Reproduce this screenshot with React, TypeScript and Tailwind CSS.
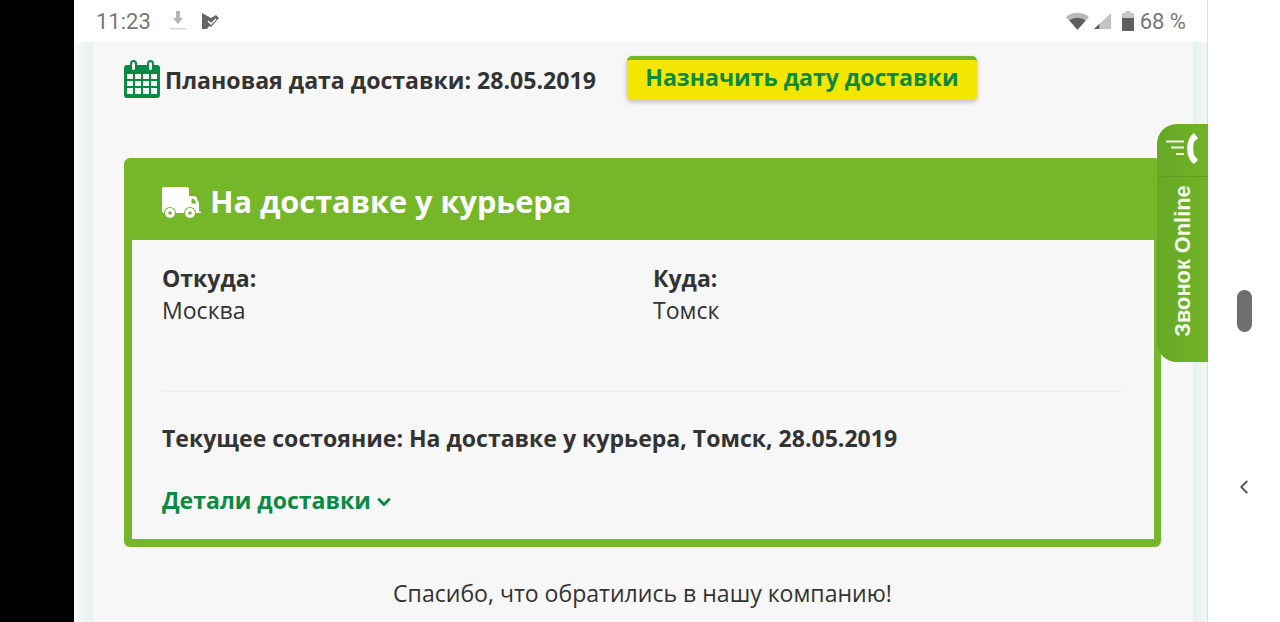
import React from 'react';
import { ChevronDown, ChevronLeft } from 'lucide-react';

const CalendarIcon = () => (
  <svg width="36" height="38" viewBox="0 0 36 38" className="shrink-0">
    <rect x="0" y="5" width="36" height="33" rx="3" fill="#0a8a43" />
    <rect x="6" y="0" width="7" height="11" rx="3.5" fill="#0a8a43" />
    <rect x="23" y="0" width="7" height="11" rx="3.5" fill="#0a8a43" />
    <rect x="8" y="2" width="3" height="8" rx="1.5" fill="#f6f6f6" />
    <rect x="25" y="2" width="3" height="8" rx="1.5" fill="#f6f6f6" />
    <path
      d="M3 14h6v5H3zM11 14h6v5h-6zM19 14h6v5h-6zM27 14h6v5h-6zM3 21h6v5H3zM11 21h6v5h-6zM19 21h6v5h-6zM27 21h6v5h-6zM3 28h6v6H3zM11 28h6v6h-6zM19 28h6v6h-6zM27 28h6v6h-6z"
      fill="#f6f6f6"
    />
  </svg>
);

const TruckIcon = () => (
  <svg width="39" height="32" viewBox="0 0 39 32" className="shrink-0 mt-[7px]">
    <path d="M2 0h23a2 2 0 0 1 2 2v7h5c1 0 2 .5 2.500 1.500L37 16v8l2 1v1H2a2 2 0 0 1-2-2V2a2 2 0 0 1 2-2z" fill="#fff" />
    <path d="M29.500 12H32l2.500 4.500h-5z" fill="#76b72a" />
    <circle cx="8" cy="26" r="6" fill="#76b72a" />
    <circle cx="28" cy="26" r="6" fill="#76b72a" />
    <circle cx="8" cy="26" r="5" fill="#fff" />
    <circle cx="8" cy="26" r="1.800" fill="#76b72a" />
    <circle cx="28" cy="26" r="5" fill="#fff" />
    <circle cx="28" cy="26" r="1.800" fill="#76b72a" />
  </svg>
);

const StatusIcons = () => (
  <div className="flex items-center">
    <svg width="23" height="18" viewBox="0 0 24 18">
      <path d="M0 5C6-1 18-1 24 5l-12 13z" fill="#b9b9b9" />
      <path d="M3.500 8.500C8 4.500 16 4.500 20.500 8.500L12 18z" fill="#5f5f5f" />
    </svg>
    <svg width="18" height="18" viewBox="0 0 20 18" className="ml-[5px]">
      <path d="M19 0v18H0z" fill="#c4c4c4" />
      <path d="M6 12v6H0z" fill="#5f5f5f" />
    </svg>
    <svg width="12" height="20" viewBox="0 0 12 20" className="ml-[10px]">
      <path d="M3.500 0h5v2H11a1 1 0 0 1 1 1v16a1 1 0 0 1-1 1H1a1 1 0 0 1-1-1V3a1 1 0 0 1 1-1h2.500z" fill="#c4c4c4" />
      <path d="M0 7h12v12a1 1 0 0 1-1 1H1a1 1 0 0 1-1-1z" fill="#5f5f5f" />
    </svg>
  </div>
);

const StatusBar = () => (
  <div className="h-[42px] flex items-center justify-between pl-[22px] pr-[21px] bg-white font-['Roboto',sans-serif] text-[#777] text-[22px]">
    <div className="flex items-center">
      <span>11:23</span>
      <svg width="18" height="20" viewBox="0 0 18 20" className="ml-[18px]">
        <path d="M7 0h4v7h3l-5 6-5-6h3z" fill="#b5b5b5" />
        <rect x="1" y="17" width="16" height="1.500" fill="#d5d5d5" />
      </svg>
      <svg width="17" height="16" viewBox="0 0 17 16" className="ml-[15px]">
        <path d="M0 0l9 5 5-3 3 3-8 9-2-1-2 3H0z" fill="#666" />
        <path d="M6 8l3 3 5-5" stroke="#fff" strokeWidth="1.500" fill="none" />
      </svg>
    </div>
    <div className="flex items-center">
      <StatusIcons />
      <span className="ml-[6px]">68 %</span>
    </div>
  </div>
);

const CallWidget = () => (
  <div className="absolute right-0 top-[124px] w-[51px] h-[238px] rounded-l-[20px] bg-gradient-to-r from-[#66a824] to-[#70b428] flex flex-col items-center">
    <div className="h-[53px] w-full flex items-center justify-center border-b border-[#5f9e20]">
      <svg width="34" height="34" viewBox="0 0 34 34">
        <path d="M0 8.500h18M5 14.500h13M10 21h8" stroke="#f0f5e8" strokeWidth="2" />
        <path d="M28 0l4 5-4 4c-1 4-1 9 0 13l4 5-4 4c-9-6-9-25 0-31z" fill="#fff" />
      </svg>
    </div>
    <div className="flex-1 w-full flex justify-center pt-[71px]">
      <span className="-rotate-90 h-[26px] leading-[26px] whitespace-nowrap font-['Liberation_Sans',sans-serif] font-bold text-[21.8px] text-[#f4f9ec]">
        Звонок Online
      </span>
    </div>
  </div>
);

const DeliveryCard = () => (
  <div className="mt-[58px] w-[1037px] rounded-[6px] bg-[#76b72a] overflow-hidden">
    <div className="h-[82px] flex items-center pl-[38px] gap-[9px] text-white font-bold text-[30.7px]">
      <TruckIcon />
      <span className="mt-[5px]">На доставке у курьера</span>
    </div>
    <div className="ml-[8px] mr-[7px] mb-[8px] h-[299px] bg-[#f7f7f7] pl-[30px] pr-[30px] text-[#333] text-[23.06px]">
      <div className="flex pt-[22px] h-[152px] border-b border-[#efefef] leading-[32px]">
        <div className="w-[491px]">
          <div className="font-bold">Откуда:</div>
          <div>Москва</div>
        </div>
        <div>
          <div className="font-bold">Куда:</div>
          <div>Томск</div>
        </div>
      </div>
      <div className="mt-[30px] font-bold leading-[32px]">
        Текущее состояние: На доставке у курьера, Томск, 28.05.2019
      </div>
      <div className="mt-[30px] flex items-center font-bold text-[#0a8a43] leading-[32px]">
        Детали доставки
        <ChevronDown size={20} strokeWidth={3.5} className="ml-[3px] mt-[4px]" />
      </div>
    </div>
  </div>
);

export default function App() {
  return (
    <div className="relative w-[1280px] h-[622px] flex overflow-hidden font-['Open_Sans',sans-serif]">
      <div className="w-[74px] bg-black shrink-0" />
      <div className="w-[1134px] shrink-0 flex flex-col bg-white border-r border-[#dcdcdc]">
        <StatusBar />
        <div className="flex-1 flex bg-[#e9f3f0]">
          <div className="w-[19px] bg-gradient-to-r from-[#f7faf9] to-[#e6f1ee]" />
          <div className="w-[1100px] bg-[#f7f7f7] pl-[31px]">
            <div className="flex items-center pt-[15px] h-[58px]">
              <CalendarIcon />
              <span className="ml-[5px] mt-[3px] font-bold text-[23.1px] text-[#333] whitespace-nowrap">
                Плановая дата доставки: 28.05.2019
              </span>
              <div className="ml-[31px] mt-[-2px] w-[350px] h-[44px] pb-[4px] rounded-[5px] border-t-[4px] border-[#76b72a] bg-[#f3e600] shadow-[0_2px_5px_rgba(0,0,0,0.25)] flex items-center justify-center font-bold text-[23.1px] text-[#0a8a43]">
                Назначить дату доставки
              </div>
            </div>
            <DeliveryCard />
            <div className="mt-[29px] w-[1037px] text-center text-[23.06px] text-[#333] whitespace-nowrap">
              Спасибо, что обратились в нашу компанию!
            </div>
          </div>
          <div className="flex-1 bg-gradient-to-r from-[#e6f1ee] to-[#f3f7f6]" />
        </div>
      </div>
      <div className="flex-1 flex flex-col items-center bg-white">
        <div className="mt-[290px] w-[15px] h-[42px] rounded-full bg-[#6e6e6e]" />
        <ChevronLeft size={22} strokeWidth={2} className="mt-[144px] text-[#555]" />
      </div>
      <div className="absolute left-[1156px] top-0 h-[622px] w-[52px] pointer-events-none">
        <CallWidget />
      </div>
    </div>
  );
}
